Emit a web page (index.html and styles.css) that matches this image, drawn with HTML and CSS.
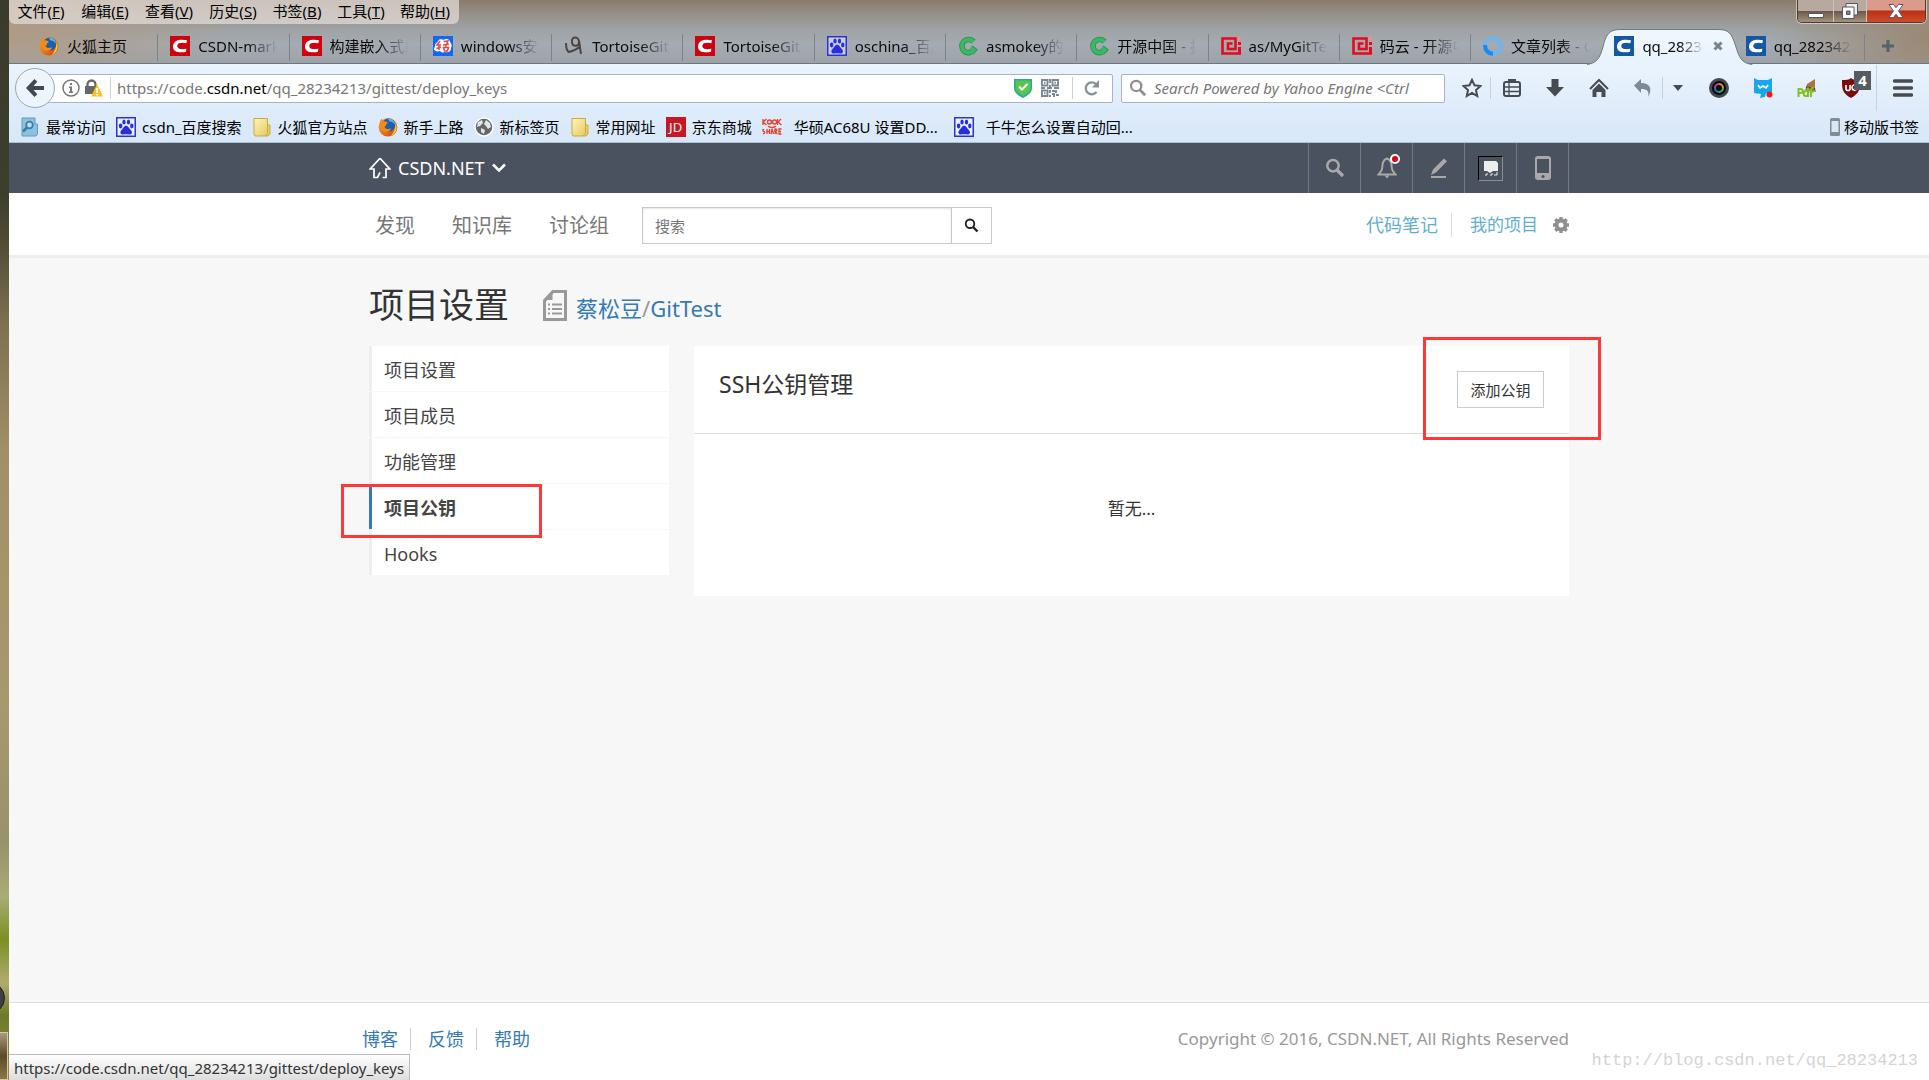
FILE: index.html
```html
<!DOCTYPE html>
<html lang="zh-CN">
<head>
<meta charset="utf-8">
<title>项目公钥 - GitTest</title>
<link rel="stylesheet" href="styles.css">
</head>
<body>
<svg class="defs" aria-hidden="true">
  <defs>
    <linearGradient id="gFolder" x1="0" y1="0" x2="1" y2="1"><stop offset="0" stop-color="#fff6b8"/><stop offset="1" stop-color="#e3c65c"/></linearGradient>
    <linearGradient id="gFox" x1="0" y1="0" x2="1" y2="1"><stop offset="0" stop-color="#f8a51c"/><stop offset=".55" stop-color="#e8701a"/><stop offset="1" stop-color="#cf3a12"/></linearGradient>
    <linearGradient id="gTab" x1="0" y1="0" x2="0" y2="1"><stop offset="0" stop-color="#f1f7fe"/><stop offset="1" stop-color="#e7f2fd"/></linearGradient>
  </defs>
  <symbol id="firefox" viewBox="0 0 20 20"><circle cx="10" cy="10.3" r="9.3" fill="url(#gFox)"/><circle cx="10.8" cy="8" r="6.600" fill="#1d5fa8"/><path d="M10 1.400c4 .2 6.600 2.600 7.300 6l-3.200-2.500-3-.6z" fill="#56b6ec"/><path d="M2 4.500l1.400-2.700 2.300 2.500c2-.3 3.300.5 4.200 1.600L8 7.500c.4 1.300-.6 1.800-1.500 2.200.7 2.700 4.200 3 6.500 1.600-.4 2.400-3 4.200-6 3.500C3.300 13.900 1 10 2 4.500z" fill="#f08a1c"/><path d="M17.500 6c2.600 5 .4 11-5 13 3.400-2.800 4.700-7.500 5-13z" fill="#fbc636"/></symbol>
  <symbol id="csdn" viewBox="0 0 20 20"><rect width="20" height="20" fill="currentColor"/><path d="M17 4.200l-.7 3c-3.700-.7-8.600-1-9 2.400-.4 4 4.700 4 9 3.200l-.3 3C9.800 17.200 2.600 16.200 3 10.200 3.300 4.200 10 2.800 17 4.200z" fill="#fff"/></symbol>
  <symbol id="baidu" viewBox="0 0 20 20"><path d="M.75.75h18.500v18.500H.75z" fill="#fff" fill-opacity=".45" stroke="#2b32dc" stroke-width="1.500"/><g fill="#2630e0"><ellipse cx="4.600" cy="9" rx="1.800" ry="2.400"/><ellipse cx="8" cy="5" rx="1.700" ry="2.500"/><ellipse cx="12.500" cy="5" rx="1.700" ry="2.500"/><ellipse cx="15.800" cy="9" rx="1.700" ry="2.400"/><path d="M10.200 8.800c2.300 0 2.600 2.600 4.600 4.200 2 1.700 1.300 4.600-1.200 4.500-2.300-.2-4.300-.3-6.600 0-2.700.3-3.500-2.700-1.500-4.500 2-1.800 2.400-4.200 4.700-4.200z"/></g></symbol>
  <symbol id="oschina" viewBox="0 0 20 20"><path d="M15.500 5.700A6.600 6.600 0 1 0 15.800 14l-3-2.200" fill="none" stroke="#21934a" stroke-width="5.600"/><path d="M15.500 5.700A6.600 6.600 0 1 0 15.800 14l-3-2.200" fill="none" stroke="#3cb765" stroke-width="4"/></symbol>
  <symbol id="mayun" viewBox="0 0 20 20"><path d="M20 17.500H1.500v-15h13v10.500H7V7.500h4.500" fill="none" stroke="#e60a1e" stroke-width="2.600"/><path d="M17 1h3v3h-3z" fill="#f58a94"/><path d="M17 6h3v3h-3zM17 11h3v7h-3z" fill="#e60a1e"/></symbol>
  <symbol id="folder" viewBox="0 0 20 20"><path d="M2 1.500h13.500V8H18v9l-2 2H3l-1-2z" fill="url(#gFolder)" stroke="#c9a93e"/><path d="M15.500 8v8.500L13 19" fill="none" stroke="#c9a93e"/></symbol>
  <symbol id="glass" viewBox="0 0 20 20"><circle cx="8" cy="7.700" r="5.700" fill="none" stroke="currentColor" stroke-width="2.500"/><path d="M12 12l6 6" stroke="currentColor" stroke-width="3.200"/></symbol>
</svg>

<div class="screen">
  <div class="desktop"><i class="orb"></i><i class="taskbar"></i></div>
  <div class="window">
    <header class="titlebar">
      <div class="topline">
        <nav class="menubar">
          <button>文件(<u>F</u>)</button><button>编辑(<u>E</u>)</button><button>查看(<u>V</u>)</button><button>历史(<u>S</u>)</button><button>书签(<u>B</u>)</button><button>工具(<u>T</u>)</button><button>帮助(<u>H</u>)</button>
        </nav>
        <div class="caption">
          <button class="cap min" aria-label="最小化"><svg width="20" height="20" viewBox="0 0 20 20"><path d="M2.500 12.500h15v4h-15z" fill="#fff" stroke="#545667"/></svg></button>
          <button class="cap max" aria-label="还原"><svg width="20" height="20" viewBox="0 0 20 20"><path d="M6 2.500h11.500V14H6z" fill="#eee" stroke="#545667"/><path d="M2.500 6H14v11.500H2.500z" fill="#fff" stroke="#545667"/><path d="M6.500 10h3.500v3.500H6.500z" fill="#8b7c72" stroke="#545667"/></svg></button>
          <button class="cap close" aria-label="关闭"><svg width="20" height="20" viewBox="0 0 20 20"><path d="M3 3.500h4.500L10 6.800l2.500-3.300H17L12.600 10l4.400 6.500h-4.500L10 13.200l-2.500 3.300H3L7.400 10z" fill="#fff" stroke="#545667"/></svg></button>
        </div>
      </div>
      <div class="tabstrip">
        <div class="tabs">
          <button class="tab"><svg class="ico"><use href="#firefox"/></svg><span>火狐主页</span></button>
          <button class="tab"><svg class="ico red"><use href="#csdn"/></svg><span>CSDN-markdown</span></button>
          <button class="tab"><svg class="ico red"><use href="#csdn"/></svg><span>构建嵌入式Linux</span></button>
          <button class="tab"><svg class="ico" viewBox="0 0 20 20"><rect width="20" height="20" fill="#1268ee"/><path d="M2 10c0-3 2-3 3-5 2-3 5-1 5-1 3-2 7-1 7 2 2 2 2 4 1 6 0 4-3 5-6 4-3 1-4 0-5-1-3 1-6 0-6-2z" fill="#fff"/><path d="M7 5L4 9h4M6 9v5M3.500 12.500L8 11M10.500 5.500L15 5l-1.500 3M10 9l6-1M13 8v3M10.500 11.500h5l-1 3.500h-3z" fill="none" stroke="#ec4545" stroke-width="1.500"/></svg><span>windows安装</span></button>
          <button class="tab"><svg class="ico" viewBox="0 0 20 20"><path d="M2 7c0 5 1 8 3 9 4-1 8-3 10-5M8 6c-1-6 7-6 7 0 0 5-7 5-7 0M15 5c1 4 1 8 2 13" fill="none" stroke="#4b4643" stroke-width="2"/></svg><span>TortoiseGit安装</span></button>
          <button class="tab"><svg class="ico red"><use href="#csdn"/></svg><span>TortoiseGit使用</span></button>
          <button class="tab"><svg class="ico"><use href="#baidu"/></svg><span>oschina_百度</span></button>
          <button class="tab"><svg class="ico"><use href="#oschina"/></svg><span>asmokey的个人</span></button>
          <button class="tab"><svg class="ico"><use href="#oschina"/></svg><span>开源中国 - 找到</span></button>
          <button class="tab"><svg class="ico"><use href="#mayun"/></svg><span>as/MyGitTest</span></button>
          <button class="tab"><svg class="ico"><use href="#mayun"/></svg><span>码云 - 开源中国</span></button>
          <button class="tab plain"><svg class="ico" viewBox="0 0 20 20"><circle cx="10" cy="10" r="7.800" fill="none" stroke="#70b4ee" stroke-width="4"/><path d="M2.200 9a7.800 7.800 0 0 0 7.800 8.800" fill="none" stroke="#178af0" stroke-width="4"/></svg><span>文章列表 - CSDN</span></button>
          <button class="tab active plain"><svg class="tabshape" viewBox="0 0 166 36" preserveAspectRatio="none"><path d="M0 35.500C10 34 13 29 16 18 19 6 22 .5 33 .5H132C142 .5 145 4 149 16 153 29 155 34 166 35.500V36H0z" fill="url(#gTab)"/><path d="M0 35.500C10 34 13 29 16 18 19 6 22 .5 33 .5H132C142 .5 145 4 149 16 153 29 155 34 166 35.500" fill="none" stroke="#6b7782"/></svg><svg class="ico blue"><use href="#csdn"/></svg><span>qq_28234213</span><svg class="x" width="10" height="10" viewBox="0 0 10 10"><path d="M1.500 1.500l7 7M8.500 1.500l-7 7" stroke="#76828e" stroke-width="3"/></svg></button>
          <button class="tab"><svg class="ico blue"><use href="#csdn"/></svg><span>qq_28234213的</span></button>
        </div>
        <button class="newtab" aria-label="新标签页"><svg width="14" height="14" viewBox="0 0 14 14"><path d="M7 1v12M1 7h12" stroke="#56616e" stroke-width="3"/></svg></button>
      </div>
    </header>

    <div class="toolbar">
      <button class="back" aria-label="后退"><svg width="20" height="20" viewBox="0 0 20 20"><path d="M1 10L9.500 1l2.800 2.700L8.500 8H19v4H8.500l3.800 4.300L9.500 19z" fill="#43484e"/></svg></button>
      <div class="urlbar">
        <svg width="18" height="18" viewBox="0 0 18 18"><circle cx="9" cy="9" r="8" fill="none" stroke="#777" stroke-width="1.500"/><path d="M8 4h2v2H8zM7 7.500h3v5h1V14H7v-1.500h1V9H7z" fill="#777"/></svg>
        <svg width="18" height="18" viewBox="0 0 18 18"><path d="M2.500 8V5.500a4 4 0 0 1 8 0V8" fill="none" stroke="#666" stroke-width="2.300"/><path d="M0 7h12v8H0z" fill="#666"/><path d="M12 5l6 12.500H6z" fill="#ffbf1f"/><path d="M11.200 9h1.700v5h-1.700zM11.200 15h1.700v1.500h-1.700z" fill="#fff"/></svg>
        <i class="rule first"></i>
        <a class="address" href="#">https://code.<b>csdn.net</b>/qq_28234213/gittest/deploy_keys</a>
        <svg class="push" width="18" height="20" viewBox="0 0 18 20"><path d="M0 1h18v9c0 5-4 7-9 10-5-3-9-5-9-10z" fill="#26a8a4"/><path d="M1.500 2.500h15V10c0 4-3.500 5.500-7.500 8.200C5 15.500 1.500 14 1.500 10z" fill="#57c74d"/><path d="M5 8.500l3 3 5.500-5.500" fill="none" stroke="#fff" stroke-width="2"/></svg>
        <svg width="18" height="18" viewBox="0 0 18 18" fill="none" stroke="#7d8790" stroke-width="1.900"><path d="M1 1h5.500v5.500H1zM11.500 1H17v5.500h-5.500zM1 11.500h5.500V17H1zM3 3.800h1.500M13.500 3.800H15M3 14.200h1.500M9 0v4M8 7h2M0 9h4M6 9h5M13 9h5M9 11v3M9 16v2M11 12h3M15 11v3M11 15h2v3M15 16h3"/></svg>
        <i class="rule"></i>
        <button class="reload" aria-label="刷新"><svg width="16" height="16" viewBox="0 0 16 16"><path d="M12.500 12A6 6 0 1 1 12 4" fill="none" stroke="#87919a" stroke-width="2.300"/><path d="M15 0v7.500H8z" fill="#87919a"/></svg></button>
      </div>
      <label class="searchbar"><svg width="18" height="18"><use href="#glass"/></svg><input type="text" placeholder="Search Powered by Yahoo Engine &lt;Ctrl" aria-label="Search"></label>
      <div class="tools">
        <button aria-label="收藏"><svg width="20" height="20" viewBox="0 0 20 20"><path d="M10 1.800l2.500 5.500 6 .7-4.500 4 1.200 6-5.200-3-5.200 3L6 12 1.500 8l6-.7z" fill="none" stroke="#464b50" stroke-width="2"/></svg></button>
        <i class="rule"></i>
        <button aria-label="书签列表"><svg width="20" height="20" viewBox="0 0 20 20"><path d="M6 1h8v3H6z" fill="#464b50"/><rect x="2" y="4" width="16" height="14" rx="2" fill="none" stroke="#464b50" stroke-width="2"/><path d="M2 9h16M2 13.500h16M7 4v14" stroke="#464b50" stroke-width="1.300"/></svg></button>
        <button aria-label="下载"><svg width="20" height="20" viewBox="0 0 20 20"><path d="M6.500 1h7v8H19l-9 9.500L1 9h5.500z" fill="#464b50"/></svg></button>
        <button aria-label="主页"><svg width="20" height="20" viewBox="0 0 20 20"><path d="M1 11L10 2l9 9" fill="none" stroke="#464b50" stroke-width="2"/><path d="M3.500 12L10 5.500l6.500 6.500v7h-4v-5h-5v5h-4z" fill="#464b50"/></svg></button>
        <button class="undo" aria-label="撤销"><svg width="20" height="20" viewBox="0 0 20 20"><path d="M1 7.500L8 1v4c9 0 12 6 7 14 1.500-6-1-8-7-8v4z" fill="#7d8993"/></svg></button>
        <i class="rule"></i>
        <button class="drop" aria-label="更多"><svg width="10" height="6" viewBox="0 0 10 6"><path d="M0 0h10L5 6z" fill="#464b50"/></svg></button>
        <button aria-label="相机"><svg width="20" height="20" viewBox="0 0 20 20"><circle cx="10" cy="10" r="10" fill="#45484e"/><circle cx="10" cy="10" r="7" fill="#08090d"/><g fill="none" stroke-width="2"><path d="M6 10a4 4 0 0 1 4-4" stroke="#c83a9b"/><path d="M10 6a4 4 0 0 1 4 4" stroke="#d89329"/><path d="M14 10a4 4 0 0 1-4 4" stroke="#38b54b"/><path d="M10 14a4 4 0 0 1-4-4" stroke="#2a71c8"/></g></svg></button>
        <button aria-label="助手"><svg width="20" height="20" viewBox="0 0 20 20"><path d="M1 0l4 2h10l4-2v14l-6 1-1 4-5 1 1-4-7-1z" fill="#17a7ee"/><path d="M5 7l2 3 3-2 3 2 2-3" fill="none" stroke="#fff" stroke-width="1.600"/><circle cx="16.500" cy="16.500" r="3" fill="#f01818"/></svg></button>
        <button class="pdf" aria-label="PDF"><svg width="20" height="20" viewBox="0 0 20 20"><path d="M18 1l-8 5-1 4-1 2 11 2-1-4z" fill="#a8734b"/><path d="M9 9l9 2" stroke="#554238" stroke-width="1.500"/><path d="M1.500 19v-8h2c3 0 3 4 0 4h-2M11 9.500V18H9c-3 0-3-5 0-5h2M14 19v-7c0-2 1-2.500 3-2M12.500 13.500H17" fill="none" stroke="#7fc41c" stroke-width="2"/></svg></button>
        <button class="ublock" aria-label="拦截器"><svg width="20" height="20" viewBox="0 0 20 20"><path d="M10 0c2 2 5 2 9 2 0 9 0 13-9 18C1 15 1 11 1 2c4 0 7 0 9-2z" fill="#7c0a0c"/><path d="M5 7v4c0 2 4 2 4 0V7M16 8c-2-2-5-1-5 1.500s3 3.500 5 1.500" fill="none" stroke="#fff" stroke-width="1.600"/></svg><span class="count">4</span></button>
        <i class="rule tall"></i>
        <button class="burger" aria-label="菜单"><svg width="20" height="18" viewBox="0 0 20 18"><path d="M1.500 2h17M1.500 9h17M1.500 16h17" stroke="#464b50" stroke-width="3.500" stroke-linecap="round"/></svg></button>
      </div>
    </div>

    <nav class="bookmarks">
      <a href="#"><svg class="ico" viewBox="0 0 20 20"><path d="M2 1h13v6h2.500v10l-1.500 2H2z" fill="#8fc1df" stroke="#5d9cc4"/><circle cx="9.500" cy="8" r="3.300" fill="#b9dff2" stroke="#3b7ba6" stroke-width="1.800"/><path d="M7 10.500l-4 4" stroke="#3b7ba6" stroke-width="2.500"/></svg>最常访问</a>
      <a href="#"><svg class="ico"><use href="#baidu"/></svg>csdn_百度搜索</a>
      <a href="#"><svg class="ico"><use href="#folder"/></svg>火狐官方站点</a>
      <a href="#"><svg class="ico"><use href="#firefox"/></svg>新手上路</a>
      <a href="#"><svg class="ico" viewBox="0 0 20 20"><circle cx="10" cy="10" r="9" fill="#666" stroke="#fff" stroke-width="1.500"/><path d="M4 5l4-2 1 3-3 3-3 1zM12 3l4 3 1 4-3 2-2-3-2-2zM7 11l4 2-1 4-3-2z" fill="#dfe6ea"/></svg>新标签页</a>
      <a href="#"><svg class="ico"><use href="#folder"/></svg>常用网址</a>
      <a href="#"><span class="ico jd">JD</span>京东商城</a>
      <a href="#" class="wide"><svg class="ico" viewBox="0 0 20 20" fill="none" stroke="#e4402c" stroke-width="1.300"><path d="M1 2v6M4.500 2L1 5l3.500 3M19 2l-3 3 3.500 3M15.500 2v6M2 12.500c-2 0-1 2 0 2s1 2.500-1 2M5 12v5M5 14.500h2.500M7.500 12v5M9 17l1-5 1.500 5M13 17v-5c3 0 2 2.500 0 2.500l2.500 2.500M19.500 12H17v5h2.500M17 14.500h2"/><circle cx="7.500" cy="5" r="2"/><circle cx="12.500" cy="5" r="2"/><path d="M6 9c2 2 6 2 8 0"/></svg>华硕AC68U 设置DD...</a>
      <a href="#" class="wide"><svg class="ico"><use href="#baidu"/></svg>千牛怎么设置自动回...</a>
      <a href="#" class="mobile"><svg width="10" height="18" viewBox="0 0 10 18"><rect width="10" height="18" rx="1.500" fill="#7f8b96"/><path d="M1.500 3h7v11h-7z" fill="#dbe8f4"/></svg>移动版书签</a>
    </nav>

    <div class="page">
      <header class="site">
        <div class="container">
          <a class="brand" href="#"><svg width="22" height="22" viewBox="0 0 22 22"><path d="M11 1.200L1.200 12H5v8.500h3.500L11 15.500M11 1.200L20.800 12H17v8.500h-3.500" fill="none" stroke="#fff" stroke-width="1.700"/></svg>CSDN.NET<svg width="14" height="10" viewBox="0 0 14 10"><path d="M1 1.500L7 7.500l6-6" fill="none" stroke="#fff" stroke-width="2.500"/></svg></a>
          <div class="usertools">
            <button aria-label="搜索"><svg width="20" height="20"><use href="#glass"/></svg></button>
            <button class="bell" aria-label="通知"><svg width="20" height="22" viewBox="0 0 20 22"><path d="M10 1.500C5.500 3 5.500 7 5.200 11c-.2 3-2 4.500-3.700 6.500h17c-1.700-2-3.500-3.500-3.700-6.500-.3-4-.3-8-4.800-9.500z" fill="none" stroke="#aaa9a8" stroke-width="2"/><path d="M7.500 18.500h5L10 21.500z" fill="#aaa9a8"/></svg><i></i></button>
            <button aria-label="写作"><svg width="18" height="20" viewBox="0 0 18 20"><path d="M1 17l2-5.500L14 .5l3 2.800L6 14.500zM1 18h15v2H1z" fill="#aaa9a8"/></svg></button>
            <button aria-label="账户"><span class="avatar"><svg width="14" height="16" viewBox="0 0 14 16"><path d="M0 1h12l2 2v8H9l-3 2-3-2H0z" fill="#eee"/><path d="M1 15h2v-2M6 15h2v-2M10 15h3v-3" stroke="#eee" fill="none"/></svg></span></button>
            <button aria-label="手机"><svg width="16" height="24" viewBox="0 0 16 24"><rect width="16" height="24" rx="3" fill="#aaa9a8"/><path d="M2 3h12v14H2z" fill="#49525e"/><circle cx="8" cy="20.500" r="1.500" fill="#49525e"/></svg></button>
          </div>
        </div>
      </header>
      <div class="subnav">
        <div class="container">
          <nav class="links"><a href="#">发现</a><a href="#">知识库</a><a href="#">讨论组</a></nav>
          <form class="find"><input type="text" placeholder="搜索" aria-label="搜索"><button type="button" aria-label="搜索"><svg width="15" height="15"><use href="#glass"/></svg></button></form>
          <nav class="mine"><a href="#">代码笔记</a><a class="projects" href="#">我的项目</a><a class="gear" href="#" aria-label="设置"><svg width="16" height="16" viewBox="0 0 16 16"><circle cx="8" cy="8" r="4.500" fill="none" stroke="#8e8e8e" stroke-width="4"/><path d="M8 0v3M8 13v3M0 8h3M13 8h3M2.300 2.300l2.200 2.200M11.500 11.500l2.200 2.200M13.700 2.300l-2.200 2.200M4.500 11.500l-2.200 2.200" stroke="#8e8e8e" stroke-width="3.400"/></svg></a></nav>
        </div>
      </div>

      <main class="container body">
        <div class="heading">
          <h1>项目设置</h1>
          <svg width="24" height="31" viewBox="0 0 24 31"><path d="M10 1.500h12.500v28h-21V11z" fill="none" stroke="#999" stroke-width="3"/><path d="M9.500 0v10H0z" fill="#999"/><path d="M5 14.500h2M9 14.500h10M5 19h2M9 19h10M5 23.500h2M9 23.500h10" stroke="#999" stroke-width="2"/></svg>
          <p><a href="#">蔡松豆</a>/<a href="#">GitTest</a></p>
        </div>
        <div class="columns">
          <nav class="side">
            <a href="#">项目设置</a><a href="#">项目成员</a><a href="#">功能管理</a><a href="#" class="current">项目公钥</a><a href="#">Hooks</a>
            <i class="mark mark-side"></i>
          </nav>
          <section class="panel">
            <header><h2>SSH公钥管理</h2><button type="button">添加公钥</button></header>
            <p>暂无...</p>
            <i class="mark mark-add"></i>
          </section>
        </div>
      </main>

      <footer class="foot">
        <div class="container">
          <nav><a href="#">博客</a><a href="#">反馈</a><a href="#">帮助</a></nav>
          <p>Copyright © 2016, CSDN.NET, All Rights Reserved</p>
        </div>
      </footer>
      <div class="status">https://code.csdn.net/qq_28234213/gittest/deploy_keys</div>
      <div class="watermark">http://blog.csdn.net/qq_28234213</div>
    </div>
  </div>
</div>
</body>
</html>
```
FILE: styles.css
```css
* { box-sizing: border-box; }
body, h1, h2, p { margin: 0; }
body {
  font-family: "Noto Sans", "Noto Sans CJK SC", sans-serif;
  font-size: 15px;
  line-height: 20px;
  color: #333;
}
a { color: inherit; text-decoration: none; }
button {
  display: flex;
  align-items: center;
  justify-content: center;
  padding: 0;
  border: 0;
  background: none;
  font: inherit;
  color: inherit;
}
input { font: inherit; border: 0; outline: 0; background: none; min-width: 0; }
svg { flex: none; display: block; }
.defs { position: absolute; width: 0; height: 0; }
.red { color: #cc0410; }
.blue { color: #1457a5; }
.ico { width: 20px; height: 20px; flex: none; }

/* desktop edge beside the window */
.screen { display: grid; grid-template-columns: 9px minmax(0, 1fr); min-height: 100vh; }
.desktop {
  position: relative;
  overflow: hidden;
  background: linear-gradient(#3b3b2d 0, #3c3f2c 18%, #4e4a34 22%, #7d7150 30%, #a38f67 42%, #a8986e 65%, #98926a 78%, #a8ac78 83%, #7c9020 87%, #b3aa70 91%, #6e7a28 94%, #8e8b50 100%);
}
.orb { position: absolute; right: 4px; bottom: 66px; width: 32px; height: 32px; border-radius: 50%; background: #394141; border: 1px solid #222; }
.taskbar { position: absolute; left: -2px; right: 1px; bottom: 0; height: 48px; background: linear-gradient(#a99b7c, #5c4a2a 50%, #8d7746); border: 1px solid #d3c7a8; }

/* window frame */
.window { display: flex; flex-direction: column; }
.titlebar {
  background:
    radial-gradient(ellipse 220px 70px at 0 50%, #b09a84 0, rgba(176,154,132,0) 100%),
    radial-gradient(ellipse 160px 90px at 100% 60%, #9a8873 0, rgba(154,136,115,0) 100%),
    linear-gradient(#897a6b 0, #969089 14px, #9fa3a5 30px, #a5abb3 44px, #9da2a7 64px);
  border-bottom: 1px solid #6b7782;
}
.topline { display: flex; justify-content: space-between; height: 29px; }
.menubar { display: flex; height: 24px; padding: 0 2px 2px 0; background: rgba(226,219,213,.75); border-radius: 0 0 6px 6px; color: #000; }
.menubar button { width: 64px; }
.caption { display: flex; height: 23px; margin-right: 3px; border: 1px solid #4b3c36; border-top: 0; border-radius: 0 0 5px 5px; overflow: hidden; box-shadow: 0 0 0 1px rgba(255,255,255,.5); }
.cap { background: linear-gradient(#b7a99f 50%, #6b5648 50%, #a3937e); border-right: 1px solid #cfc5bb; }
.min { width: 36px; }
.max { width: 33px; }
.close { width: 58px; background: linear-gradient(#dc9a8b 45%, #b93215 50%, #cf4a2a); border: 0; }
.tabstrip { display: flex; height: 34px; }
.tabs { display: flex; flex: 1; min-width: 0; padding-left: 18px; }
.tab { position: relative; flex: 1 1 0; min-width: 0; justify-content: flex-start; gap: 8px; padding: 0 11px 0 12px; color: #0b0b0b; }
.tab:not(.plain)::after { content: ""; position: absolute; right: 0; top: 5px; width: 1px; height: 27px; background: #7b8289; }
.tab span { flex: 1; min-width: 0; overflow: hidden; white-space: nowrap; text-align: left; -webkit-mask-image: linear-gradient(90deg, #000 60%, transparent 98%); mask-image: linear-gradient(90deg, #000 60%, transparent 98%); }
.tab:first-child span { -webkit-mask-image: none; mask-image: none; }
.active .ico, .active span, .active .x { position: relative; }
.tabshape { position: absolute; left: -15px; top: 0; width: calc(100% + 34px); height: 36px; }
.newtab { width: 64px; padding-right: 18px; }

/* toolbar */
.toolbar { display: flex; align-items: center; height: 48px; padding: 0 16px 0 6px; background: linear-gradient(#eaf4fe, #deebfa); }
.back { width: 40px; height: 40px; flex: none; border: 1px solid #98a9ba; border-radius: 50%; background: #edf4fb; z-index: 1; }
.urlbar { display: flex; align-items: center; flex: 1 1 0; gap: 5px; height: 29px; margin-left: -10px; padding: 0 12px 0 16px; background: #fff; border: 1px solid #a5b5c6; border-radius: 2px; }
.rule { width: 1px; height: 22px; background: #c9d1d9; flex: none; }
.address { color: #777; white-space: nowrap; }
.address b { font-weight: 400; color: #000; }
.push { margin-left: auto; }
.urlbar .rule { margin: 0 3px; }
.urlbar .first { margin: 0 1px 0 2px; }
.urlbar .push + svg { margin: 0 5px 0 4px; }
.reload { margin-left: 3px; }
.searchbar { display: flex; align-items: center; gap: 7px; width: 324px; height: 29px; margin-left: 8px; padding: 0 7px; background: #fff; border: 1px solid #a5b5c6; border-radius: 2px; color: #8f8f8f; }
.searchbar input { flex: 1; padding: 0; font-style: italic; }
.searchbar input::placeholder { color: #777; opacity: 1; }
.tools { display: flex; align-items: center; }
.tools button { width: 44px; height: 28px; }
.tools button:first-child { width: 36px; margin-left: 9px; }
.tools .rule + button { width: 42px; }
.tools .undo { width: 38px; margin-left: 3px; }
.tools .rule + .drop { width: 30px; margin-right: 4px; }
.tools .rule + .burger { width: 20px; margin-left: 16px; }
.tools .ublock { position: relative; }
.count { position: absolute; left: 25px; top: -3px; width: 17px; height: 19px; background: #555b60; color: #fff; font-weight: 700; text-align: center; line-height: 18px; }
.tall { height: 46px; margin-left: 3px; }

.bookmarks { display: flex; align-items: center; gap: 10px; height: 31px; padding: 0 10px 0 11px; background: linear-gradient(#deebfa, #d7e8f8); border-bottom: 1px solid #aebfd0; color: #000; }
.bookmarks a { display: flex; align-items: center; gap: 6px; white-space: nowrap; }
.bookmarks .wide { gap: 12px; margin-right: 6px; }
.bookmarks .mobile { margin-left: auto; gap: 4px; }
.jd { background: #c91623; color: #fff; text-align: center; font-size: 13px; }

/* page */
.page { position: relative; display: flex; flex-direction: column; flex: 1; background: #f7f7f7; }
.container { width: 100%; max-width: 1200px; margin: 0 auto; display: flex; align-items: center; }
.site { background: #49525e; }
.site .container { height: 50px; justify-content: space-between; }
.brand { display: flex; align-items: center; gap: 7px; color: #fff; font-size: 18px; }
.usertools { display: flex; height: 50px; border-left: 1px solid #737b7e; color: #aaa9a8; }
.usertools button { width: 52px; border-right: 1px solid #737b7e; }
.bell { position: relative; }
.bell i { position: absolute; left: 29px; top: 11px; width: 10px; height: 10px; border-radius: 50%; background: #e00012; border: 2px solid #fff; }
.avatar { display: grid; place-items: center; width: 25px; height: 25px; border: 1px solid #8a8f93; border-top-color: #000; border-left-color: #000; }
.subnav { background: #fff; border-bottom: 3px solid #ededed; }
.subnav .container { height: 62px; padding-top: 3px; }
.links { display: flex; gap: 37px; padding-left: 6px; width: 273px; font-size: 20px; color: #777; }
.find { display: flex; width: 350px; height: 37px; border: 1px solid #c8c8c8; }
.find input { flex: 1; padding: 0 12px; box-shadow: inset 0 1px 2px #e4e4e4; }
.find input::placeholder { color: #777; opacity: 1; }
.find button { width: 40px; border-left: 1px solid #c8c8c8; color: #222; }
.mine { display: flex; align-items: center; margin-left: auto; padding-bottom: 2px; font-size: 18px; color: #62aed1; line-height: 24px; }
.mine .projects { font-size: 17px; margin-left: 13px; padding-left: 18px; border-left: 1px solid #ddd; }
.gear { margin-left: 15px; }

.body { flex: 1; flex-direction: column; align-items: stretch; }
.heading { display: flex; align-items: center; height: 88px; padding-top: 6px; }
.heading h1 { font-size: 35px; font-weight: 400; line-height: 40px; margin-right: 34px; }
.heading p { font-size: 22px; line-height: 30px; margin-left: 9px; padding-top: 5px; color: #999; }
.heading a { color: #337ab7; }
.columns { display: flex; align-items: flex-start; gap: 25px; }
.side { position: relative; width: 300px; display: flex; flex-direction: column; gap: 1px; font-size: 18px; line-height: 24px; }
.side a { height: 45px; padding: 12px; border-left: 3px solid #eee; background: #fff; color: #444; }
.side .current { border-color: #337ab7; font-weight: 700; }
.panel { position: relative; flex: 1; background: #fff; }
.panel header { display: flex; justify-content: space-between; height: 88px; padding: 25px; border-bottom: 1px solid #ddd; }
.panel h2 { font-size: 23px; line-height: 26px; font-weight: 400; }
.panel button { width: 87px; height: 37px; border: 1px solid #ccc; background: #fff; }
.panel p { height: 162px; padding-top: 63px; text-align: center; font-size: 17px; line-height: 24px; }
.mark { position: absolute; border: 3px solid #ff3737; pointer-events: none; }
.mark-side { left: -28px; top: 138px; width: 201px; height: 54px; }
.mark-add { right: -32px; top: -9px; width: 178px; height: 103px; }

.foot { background: #fff; border-top: 1px solid #ddd; }
.foot .container { height: 77px; padding-bottom: 5px; justify-content: space-between; font-size: 18px; line-height: 22px; color: #999; }
.foot nav { display: flex; margin-left: -7px; color: #337ab7; }
.foot nav a { padding-right: 12px; margin-right: 17px; border-right: 1px solid #ccc; }
.foot nav a:last-child { border: 0; }
.foot p { font-size: 17px; }
.status { position: absolute; left: 0; bottom: 0; height: 26px; padding: 3px 5px; background: linear-gradient(#fff, #ddd); border: 1px solid #bbb; border-width: 1px 1px 0 0; }
.watermark { position: absolute; right: 11px; bottom: 9px; font: 17px/20px "Liberation Mono", monospace; color: #d4d4d4; }
```
